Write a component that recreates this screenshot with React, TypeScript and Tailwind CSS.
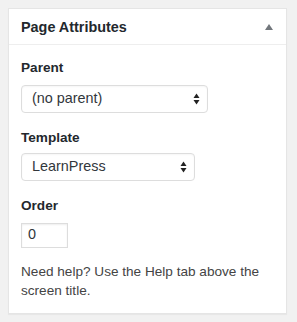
const font = { fontFamily: '"Liberation Sans", Arial, sans-serif' };

function SelectBox({ value, width }: { value: string; width: string }) {
  return (
    <div
      className={`${width} h-[28px] flex items-center justify-between pl-[10px] pr-[6px] bg-white border border-[#dddddd] rounded-[4px] shadow-[inset_0_1px_2px_rgba(0,0,0,0.04)]`}
    >
      <span className="text-[14.4px] text-[#32373c]">{value}</span>
      <svg width="7" height="12" viewBox="0 0 7 12" className="mr-[1px]">
        <path d="M3.5 0.5 L6.5 5 L0.5 5 Z" fill="#222" />
        <path d="M0.5 7 L6.5 7 L3.5 11.5 Z" fill="#222" />
      </svg>
    </div>
  );
}

export default function App() {
  return (
    <div className="min-h-[322px] bg-[#f1f1f1] p-[8px] pb-[10px]" style={font}>
      <div className="w-[279px] bg-white border border-[#e5e5e5] shadow-[0_1px_1px_rgba(0,0,0,0.04)]">
        <div className="h-[36px] flex items-center justify-between pl-[12px] pr-[13px] border-b border-[#eeeeee]">
          <h2 className="text-[14.4px] font-bold text-[#23282d] leading-none pt-[1px]">Page Attributes</h2>
          <svg width="8" height="6" viewBox="0 0 8 6" className="mt-[1px]">
            <path d="M4 0 L8 6 L0 6 Z" fill="#72777c" />
          </svg>
        </div>
        <div className="px-[12px] pb-[12px] text-[13.6px] leading-[19.5px] text-[#32373c]">
          <p className="mt-[13px] mb-[7px] font-bold text-[#23282d]">Parent</p>
          <SelectBox value="(no parent)" width="w-[187px]" />
          <p className="mt-[15px] mb-[6px] font-bold text-[#23282d]">Template</p>
          <SelectBox value="LearnPress" width="w-[174px]" />
          <p className="mt-[15px] mb-[7px] font-bold text-[#23282d]">Order</p>
          <div className="w-[47px] h-[25px] flex items-center px-[6px] bg-white border border-[#dddddd] shadow-[inset_0_1px_2px_rgba(0,0,0,0.07)]">
            <span className="text-[14.4px] text-[#32373c]">0</span>
          </div>
          <p className="mt-[14px] text-[#444]">Need help? Use the Help tab above the screen title.</p>
        </div>
      </div>
    </div>
  );
}
